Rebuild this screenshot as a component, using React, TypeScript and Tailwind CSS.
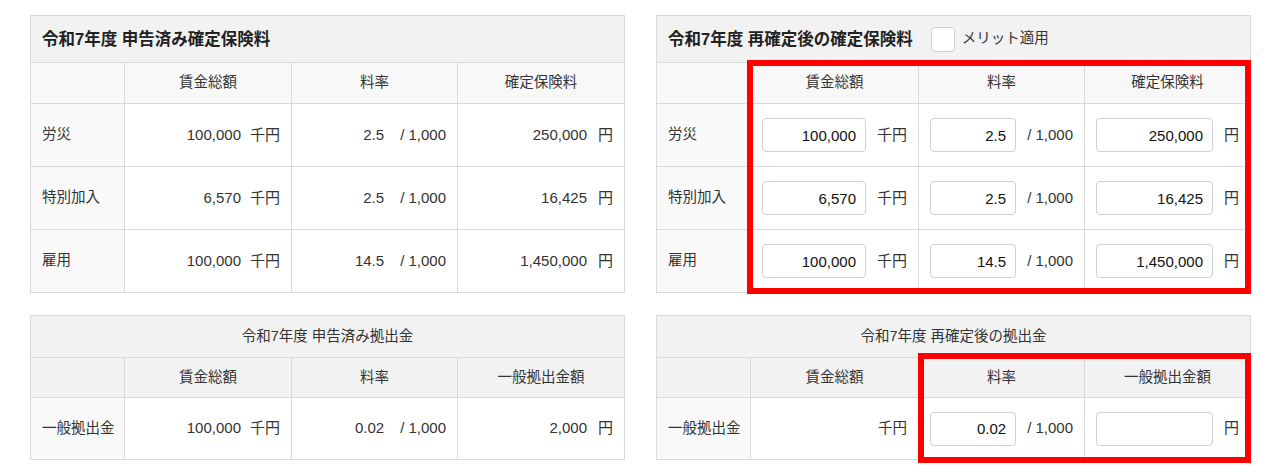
import React from "react";

const FONT = { fontFamily: '"Liberation Sans", "Noto Sans CJK JP", sans-serif' };

type Row = { label: string; wage: string; rate: string; premium: string };

const reported: Row[] = [
  { label: "労災", wage: "100,000", rate: "2.5", premium: "250,000" },
  { label: "特別加入", wage: "6,570", rate: "2.5", premium: "16,425" },
  { label: "雇用", wage: "100,000", rate: "14.5", premium: "1,450,000" },
];

const cellBase = "border border-[#d9d9d9] px-[11px] align-middle";
const labelCell = "border border-[#d9d9d9] bg-[#f9f9f9] pl-[11px] pr-0 align-middle whitespace-nowrap";

function StaticCell({ value, unit, unitGap }: { value: string; unit: string; unitGap: string }) {
  return (
    <td className={`${cellBase} bg-white`}>
      <div className="flex items-center justify-end text-[15px]">
        <span>{value}</span>
        <span className={unitGap}>{unit}</span>
      </div>
    </td>
  );
}

function InputCell({ value, unit }: { value?: string; unit: string }) {
  return (
    <td className={`${cellBase} bg-white`}>
      <div className="flex items-center gap-[11px]">
        <input
          readOnly
          value={value ?? ""}
          className="h-[34px] w-full min-w-0 flex-1 rounded-[4px] border border-[#d0d0d0] bg-white pr-[9px] text-right text-[15px] text-[#111] outline-none"
          style={FONT}
        />
        <span className="shrink-0 text-[15px]">{unit}</span>
      </div>
    </td>
  );
}

function ColHeads({ last, bg, h }: { last: string; bg: string; h: string }) {
  return (
    <tr className={h}>
      <th className={`${cellBase} ${bg}`}></th>
      <th className={`${cellBase} ${bg} font-normal`}>賃金総額</th>
      <th className={`${cellBase} ${bg} font-normal`}>料率</th>
      <th className={`${cellBase} ${bg} font-normal`}>{last}</th>
    </tr>
  );
}

function Cols({ widths }: { widths: string[] }) {
  return (
    <colgroup>
      {widths.map((w, i) => (
        <col key={i} className={w} />
      ))}
    </colgroup>
  );
}

const leftCols = ["w-[94px]", "w-[167px]", "w-[166px]", "w-[167px]"];
const rightCols = ["w-[94px]", "w-[168px]", "w-[166px]", "w-[166px]"];

export default function App() {
  return (
    <div className="min-h-[473px] bg-white text-[14.5px] text-[#333]" style={FONT}>
      <div className="grid grid-cols-[594px_594px] gap-x-[32px] gap-y-[22px] px-[30px] pt-[15px]">
        {/* 申告済み 確定保険料 */}
        <table className="w-[594px] table-fixed">
          <Cols widths={leftCols} />
          <thead>
            <tr className="h-[47px]">
              <th colSpan={4} className={`${cellBase} bg-[#f2f2f2] text-left text-[16.5px] font-bold text-[#222]`}>
                令和7年度 申告済み確定保険料
              </th>
            </tr>
            <ColHeads last="確定保険料" bg="bg-[#f8f8f8]" h="h-[41px]" />
          </thead>
          <tbody>
            {reported.map((r) => (
              <tr key={r.label} className="h-[63px]">
                <td className={labelCell}>{r.label}</td>
                <StaticCell value={r.wage} unit="千円" unitGap="ml-[9px]" />
                <StaticCell value={r.rate} unit="/ 1,000" unitGap="ml-[16px]" />
                <StaticCell value={r.premium} unit="円" unitGap="ml-[11px]" />
              </tr>
            ))}
          </tbody>
        </table>

        {/* 再確定後 確定保険料 */}
        <div className="relative">
          <table className="w-[594px] table-fixed">
            <Cols widths={rightCols} />
            <thead>
              <tr className="h-[47px]">
                <th colSpan={4} className={`${cellBase} bg-[#f2f2f2] text-left font-normal`}>
                  <div className="flex items-center">
                    <span className="text-[16.5px] font-bold text-[#222]">令和7年度 再確定後の確定保険料</span>
                    <input
                      type="checkbox"
                      readOnly
                      className="ml-[18px] h-[25px] w-[24px] appearance-none rounded-[4px] border border-[#d0d0d0] bg-white"
                    />
                    <span className="ml-[7px]">メリット適用</span>
                  </div>
                </th>
              </tr>
              <ColHeads last="確定保険料" bg="bg-[#f8f8f8]" h="h-[41px]" />
            </thead>
            <tbody>
              {reported.map((r) => (
                <tr key={r.label} className="h-[63px]">
                  <td className={labelCell}>{r.label}</td>
                  <InputCell value={r.wage} unit="千円" />
                  <InputCell value={r.rate} unit="/ 1,000" />
                  <InputCell value={r.premium} unit="円" />
                </tr>
              ))}
            </tbody>
          </table>
          <div className="pointer-events-none absolute left-[91px] top-[45px] h-[234px] w-[504px] border-[6px] border-[#ff0000]" />
        </div>

        {/* 申告済み 拠出金 */}
        <table className="w-[594px] table-fixed">
          <Cols widths={leftCols} />
          <thead>
            <tr className="h-[42px]">
              <th colSpan={4} className={`${cellBase} bg-[#f2f2f2] text-center font-normal`}>
                令和7年度 申告済み拠出金
              </th>
            </tr>
            <ColHeads last="一般拠出金額" bg="bg-[#f2f2f2]" h="h-[40px]" />
          </thead>
          <tbody>
            <tr className="h-[62px]">
              <td className={labelCell}>一般拠出金</td>
              <StaticCell value="100,000" unit="千円" unitGap="ml-[9px]" />
              <StaticCell value="0.02" unit="/ 1,000" unitGap="ml-[16px]" />
              <StaticCell value="2,000" unit="円" unitGap="ml-[11px]" />
            </tr>
          </tbody>
        </table>

        {/* 再確定後 拠出金 */}
        <div className="relative">
          <table className="w-[594px] table-fixed">
            <Cols widths={rightCols} />
            <thead>
              <tr className="h-[42px]">
                <th colSpan={4} className={`${cellBase} bg-[#f2f2f2] text-center font-normal`}>
                  令和7年度 再確定後の拠出金
                </th>
              </tr>
              <ColHeads last="一般拠出金額" bg="bg-[#f2f2f2]" h="h-[40px]" />
            </thead>
            <tbody>
              <tr className="h-[62px]">
                <td className={labelCell}>一般拠出金</td>
                <td className={`${cellBase} bg-white text-right`}>千円</td>
                <InputCell value="0.02" unit="/ 1,000" />
                <InputCell unit="円" />
              </tr>
            </tbody>
          </table>
          <div className="pointer-events-none absolute left-[262px] top-[38px] h-[110px] w-[333px] border-[6px] border-[#ff0000]" />
        </div>
      </div>
    </div>
  );
}
